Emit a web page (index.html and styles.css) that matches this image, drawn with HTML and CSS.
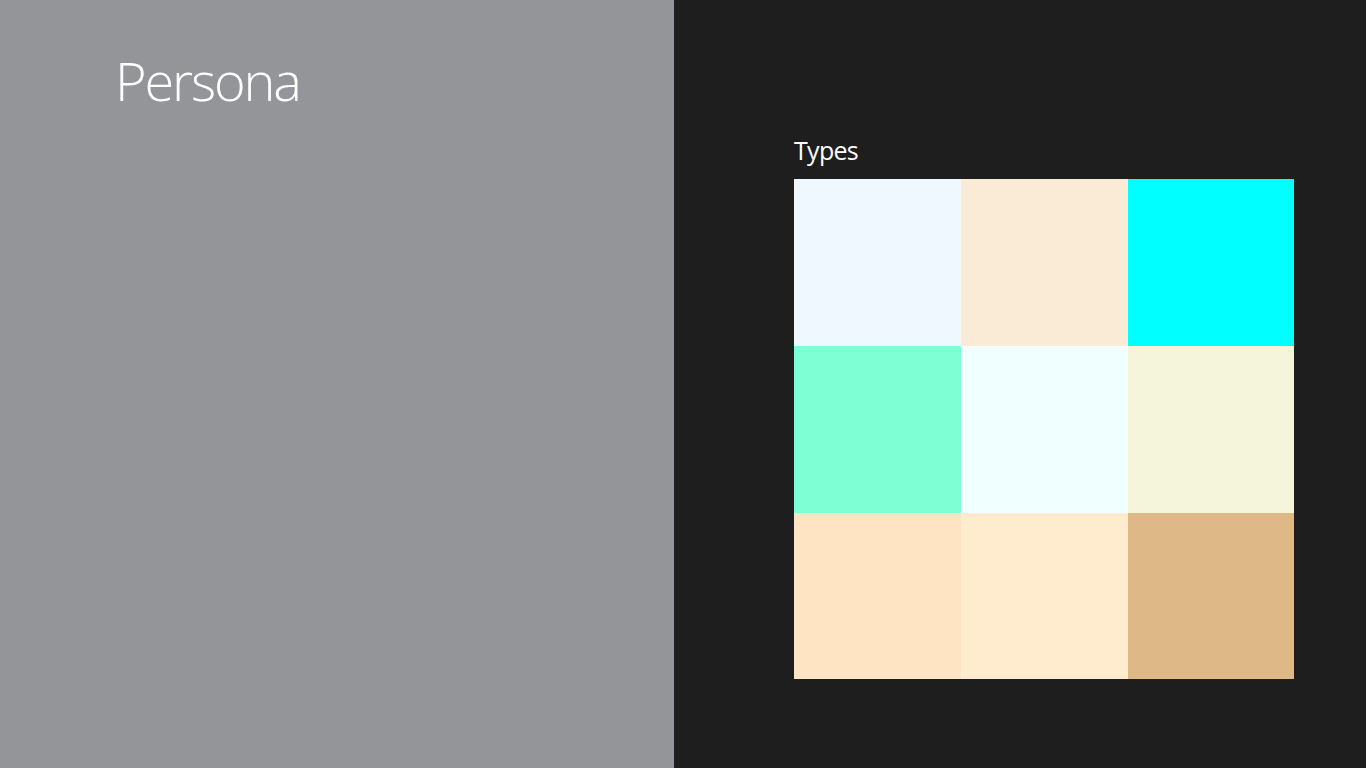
FILE: index.html
```html
<!DOCTYPE html>
<html>
<head>
<meta charset="utf-8">
<link rel="stylesheet" href="styles.css">
</head>
<body>
<div class="app">
  <section class="left">
    <h1 class="title">Persona</h1>
  </section>
  <section class="right">
    <h2 class="label">Types</h2>
    <div class="grid">
      <div class="cell c1"></div>
      <div class="cell c2"></div>
      <div class="cell c3"></div>
      <div class="cell c4"></div>
      <div class="cell c5"></div>
      <div class="cell c6"></div>
      <div class="cell c7"></div>
      <div class="cell c8"></div>
      <div class="cell c9"></div>
    </div>
  </section>
</div>
</body>
</html>
```
FILE: styles.css
```css
html, body {
  margin: 0;
  padding: 0;
  height: 100%;
}
body {
  font-family: "Open Sans", "Noto Sans", sans-serif;
  color: #ffffff;
  overflow: hidden;
}
.app {
  display: flex;
  width: 1366px;
  height: 768px;
}
.left {
  width: 674px;
  background: #939599;
  padding: 0 0 0 115px;
  box-sizing: border-box;
}
.title {
  margin: 44px 0 0 0;
  font-weight: 300;
  font-size: 54px;
  line-height: 72px;
  letter-spacing: -2.1px;
}
.right {
  flex: 1;
  background: #1e1e1e;
  padding: 131px 0 0 120px;
  box-sizing: border-box;
}
.label {
  margin: 0 0 10px 0;
  font-weight: 400;
  font-size: 25px;
  line-height: 38px;
  letter-spacing: -0.7px;
}
.grid {
  display: grid;
  grid-template-columns: 167px 167px 166px;
  grid-template-rows: 167px 167px 166px;
  width: 500px;
  height: 500px;
}
.c1 { background: #f0f8ff; }
.c2 { background: #faebd7; }
.c3 { background: #00ffff; }
.c4 { background: #7fffd4; }
.c5 { background: #f0ffff; }
.c6 { background: #f5f5dc; }
.c7 { background: #ffe4c4; }
.c8 { background: #ffebcd; }
.c9 { background: #deb887; }
```
